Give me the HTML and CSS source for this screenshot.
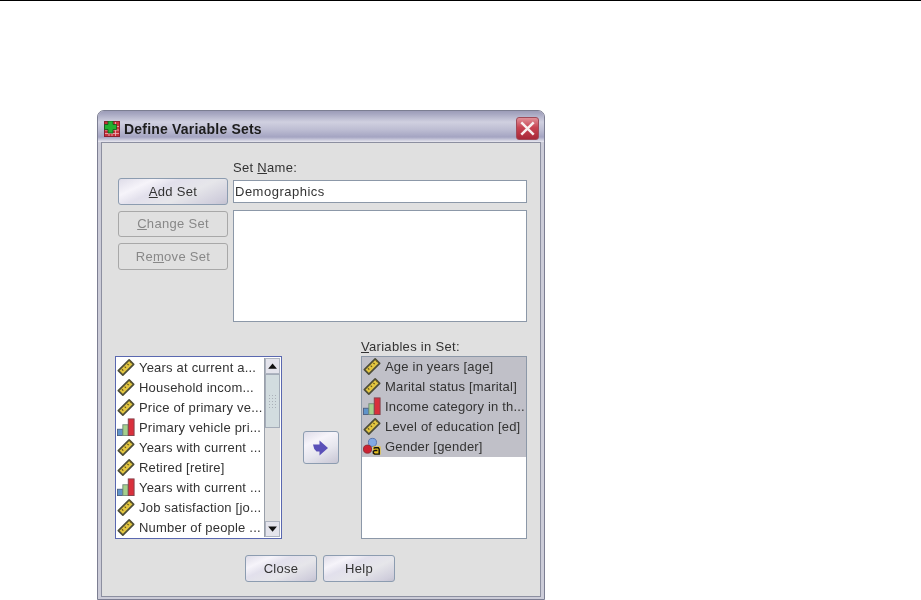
FILE: index.html
```html
<!DOCTYPE html>
<html lang="en">
<head>
<meta charset="utf-8">
<title>Define Variable Sets</title>
<link rel="stylesheet" href="styles.css">
</head>
<body>
<svg class="defs" width="0" height="0" aria-hidden="true">
  <symbol id="ruler" viewBox="0 0 20 20">
    <path d="M1.500 14 13.500 2 18.500 7 6.500 19Z" fill="#e2c640" stroke="#4e4e38" stroke-width="1.900" stroke-linejoin="round"/>
    <path d="M5.500 12.500l1.500 1.500M8.500 9.500l1.500 1.500M11.500 6.500l1.500 1.500M14.500 3.800l1.500 1.500" stroke="#6a5820" stroke-width="1.300"/>
  </symbol>
  <symbol id="bars" viewBox="0 0 20 20">
    <rect x="0.500" y="12.500" width="6" height="7" fill="#5f93c9" stroke="#4b5f80"/>
    <rect x="6.500" y="7.500" width="6" height="12" fill="#a4d08c" stroke="#70887a"/>
    <rect x="12.500" y="1" width="6.500" height="18.500" fill="#d9303c" stroke="#80404a"/>
  </symbol>
</svg>
<div class="rule"></div>
<section class="dialog">
  <header class="titlebar">
    <svg class="app-icon" viewBox="0 0 16 16" aria-hidden="true">
      <rect x="0.500" y="0.500" width="15" height="15" fill="#c8323c" stroke="#8a2030"/>
      <path d="M1 5.500h14M1 9h14M1 12.500h14M5 1v14M8 1v14M11.500 1v14" stroke="#eeb8bc" stroke-width="0.800"/>
      <path d="M4 0h5v3.500h3.500v5H9V12H4V8.500H0.500v-5H4Z" fill="#22b032" stroke="#0e5a18" stroke-width="0.800"/>
    </svg>
    <h1 class="title">Define Variable Sets</h1>
    <button class="close-x" aria-label="Close">
      <svg viewBox="0 0 22 22" aria-hidden="true"><path d="M4.500 4.500l13 13M17.500 4.500l-13 13" stroke="#f8f0f0" stroke-width="2.600"/></svg>
    </button>
  </header>
  <div class="panel">
    <div class="top-row">
      <div class="actions">
        <button class="btn"><u>A</u>dd Set</button>
        <button class="btn off"><u>C</u>hange Set</button>
        <button class="btn off">Re<u>m</u>ove Set</button>
      </div>
      <div class="set-col">
        <label class="lbl">Set <u>N</u>ame:</label>
        <div class="field">Demographics</div>
        <div class="setbox"></div>
      </div>
    </div>
    <div class="lists">
      <div class="source">
        <ul class="vars">
          <li><svg class="ico"><use href="#ruler"/></svg>Years at current a...</li>
          <li><svg class="ico"><use href="#ruler"/></svg>Household incom...</li>
          <li><svg class="ico"><use href="#ruler"/></svg>Price of primary ve...</li>
          <li><svg class="ico"><use href="#bars"/></svg>Primary vehicle pri...</li>
          <li><svg class="ico"><use href="#ruler"/></svg>Years with current ...</li>
          <li><svg class="ico"><use href="#ruler"/></svg>Retired [retire]</li>
          <li><svg class="ico"><use href="#bars"/></svg>Years with current ...</li>
          <li><svg class="ico"><use href="#ruler"/></svg>Job satisfaction [jo...</li>
          <li><svg class="ico"><use href="#ruler"/></svg>Number of people ...</li>
        </ul>
        <div class="scroll">
          <div class="sb-btn"><svg viewBox="0 0 16 16" aria-hidden="true"><path d="M2.500 11h10L7.500 5Z"/></svg></div>
          <div class="sb-track"><div class="sb-thumb"><div class="sb-grip"></div></div></div>
          <div class="sb-btn"><svg viewBox="0 0 16 16" aria-hidden="true"><path d="M2.500 5h10L7.500 11Z"/></svg></div>
        </div>
      </div>
      <div class="mover">
        <button class="arrow" aria-label="Move">
          <svg viewBox="0 0 20 18" aria-hidden="true"><path d="M2 5.500h6.500V1.500L17 9l-8.500 7.500v-4H5.500Q2.500 10 2 5.500Z" fill="#5a50b8"/></svg>
        </button>
      </div>
      <div class="target-col">
        <label class="lbl lbl-list"><u>V</u>ariables in Set:</label>
        <ul class="vars target">
          <li class="sel"><svg class="ico"><use href="#ruler"/></svg>Age in years [age]</li>
          <li class="sel"><svg class="ico"><use href="#ruler"/></svg>Marital status [marital]</li>
          <li class="sel"><svg class="ico"><use href="#bars"/></svg>Income category in th...</li>
          <li class="sel"><svg class="ico"><use href="#ruler"/></svg>Level of education [ed]</li>
          <li class="sel"><svg class="ico" viewBox="0 0 20 20" aria-hidden="true">
            <circle cx="10.500" cy="6" r="4.500" fill="#82a8e4" stroke="#5570a8"/>
            <circle cx="5" cy="13.500" r="4.500" fill="#cc2233" stroke="#8a2a30"/>
            <rect x="11" y="10.500" width="8.500" height="9" fill="#e8c020"/>
            <path d="M12.500 12h4.500l1 1.500v5.500h-5l-1.500-1v-2l1.500-1h3M12.500 12v1" fill="none" stroke="#111" stroke-width="1.600"/>
          </svg>Gender [gender]</li>
        </ul>
      </div>
    </div>
    <div class="footer">
      <button class="btn foot">Close</button>
      <button class="btn foot">Help</button>
    </div>
  </div>
</section>
</body>
</html>
```
FILE: styles.css
```css
html, body { margin: 0; padding: 0; height: 600px; overflow: hidden; background: #fff; }
body { font-family: "Liberation Sans", Arial, sans-serif; font-size: 13px; letter-spacing: 0.3px; color: #333; }
.defs { display: block; height: 0; }
.rule { height: 1px; background: #000; }
.dialog {
  box-sizing: border-box;
  width: 448px; height: 490px;
  margin: 109px 0 0 97px;
  border: 1px solid #7c7e92;
  border-radius: 7px 7px 0 0;
  background: #ccccd8;
  padding: 0 3px 2px 3px;
  display: flex; flex-direction: column;
  filter: blur(0.3px);
}
.titlebar {
  flex: none; box-sizing: border-box; height: 31px;
  margin: 0 -3px; padding: 4px 5px 0 6px;
  border-radius: 6px 6px 0 0;
  background: linear-gradient(180deg, #9c9cb8 0, #a8a8c2 3px, #d0d0e0 11px, #bcbcd2 19px, #a4a4c2 26px, #e8e8f0 31px);
  display: flex; align-items: center; gap: 4px;
}
.app-icon { width: 16px; height: 16px; flex: none; }
.title { margin: 0; font-size: 14px; font-weight: bold; letter-spacing: 0.2px; color: #1c1c1c; flex: 1; }
.close-x {
  width: 23px; height: 23px; padding: 0; flex: none; margin-top: -1px;
  border: 1px solid #a04a58; border-radius: 3px;
  background: linear-gradient(180deg, #e09098 0, #c84452 45%, #a82838 100%);
  display: block;
}
.close-x svg { display: block; width: 21px; height: 21px; }
.panel {
  flex: 1; min-height: 0;
  border: 1px solid #8c8fa0;
  background: #e0e0e0;
  padding: 18px 13px 13px 16px;
  display: flex; flex-direction: column;
}
.top-row { display: flex; gap: 5px; height: 179px; flex: none; }
.actions { width: 110px; flex: none; padding-top: 17px; display: flex; flex-direction: column; gap: 6px; }
.btn {
  box-sizing: border-box; height: 26.500px; width: 110px; padding: 0;
  font: inherit; letter-spacing: inherit; color: #333;
  border: 1px solid #8c9cb0; border-radius: 3px;
  background: linear-gradient(155deg, #dedce8 0%, #f6f4fa 22%, #e2e0ec 38%, #e6e6ea 62%, #d0cedc 90%, #c4c2d0 100%);
}
.btn.off { color: #888; border-color: #a8a8a8; background: #e0e0e0; }
.set-col { flex: 1; min-width: 0; }
.lbl { display: block; height: 13px; line-height: 13px; }
.field {
  box-sizing: border-box; height: 23px; margin-top: 6px; padding-left: 1px; line-height: 22px; letter-spacing: 0.5px;
  background: #fff; border: 1px solid #8c98a8;
}
.setbox {
  box-sizing: border-box; height: 112px; margin-top: 7px;
  background: #fff; border: 1px solid #8c98a8;
}
.lists { display: flex; height: 183px; flex: none; margin-top: 16px; margin-left: -3px; }
.source {
  box-sizing: border-box; width: 167px; height: 183px; flex: none;
  border: 1px solid #5a68b0; background: #fff;
  display: flex;
}
.vars { list-style: none; margin: 0; padding: 1px 0 0; flex: 1; min-width: 0; overflow: hidden; letter-spacing: 0.2px; }
.vars li {
  height: 20px; line-height: 20px; white-space: nowrap;
  display: flex; align-items: center; gap: 4px;
}
.ico { width: 18px; height: 18px; flex: none; margin: -2px 0 0 1px; }
.scroll { width: 15px; flex: none; margin: 1px 1px 1px 0; display: flex; flex-direction: column; background: #e0e0e0; border-left: 1px solid #9aa0aa; }
.sb-btn { height: 16px; flex: none; box-sizing: border-box; border: 1px solid #aeb4c0; background: #e4e4ec; }
.sb-btn svg { display: block; width: 14px; height: 14px; fill: #111; }
.sb-track { flex: 1; }
.sb-thumb {
  box-sizing: border-box; height: 54px;
  border: 1px solid #a4acb8;
  background: #d2dcdf;
  display: flex; align-items: center; justify-content: center;
}
.sb-grip {
  width: 9px; height: 15px;
  background: radial-gradient(circle, #aab0b8 0 1px, transparent 1px) 0 0 / 3px 3px;
}
.mover { width: 79px; flex: none; display: flex; justify-content: center; align-items: flex-start; padding: 75px 1px 0 0; box-sizing: border-box; }
.arrow {
  box-sizing: border-box; width: 36px; height: 33px; padding: 0;
  border: 1px solid #8c9cb0; border-radius: 3px;
  background: linear-gradient(155deg, #dedce8 0%, #f6f4fa 30%, #e6e6ee 60%, #c8c6d4 100%);
  display: flex; align-items: center; justify-content: center;
}
.arrow svg { width: 20px; height: 18px; }
.target-col { width: 166px; flex: none; margin-top: -16px; }
.lbl-list { height: 16px; line-height: 14px; }
.target { box-sizing: border-box; height: 183px; border: 1px solid #8c98a8; background: #fff; padding: 0; }
.sel { background: #c0c0c8; }
.footer { display: flex; gap: 6px; margin-top: 16px; margin-left: 127px; }
.btn.foot { width: 72px; }
```
